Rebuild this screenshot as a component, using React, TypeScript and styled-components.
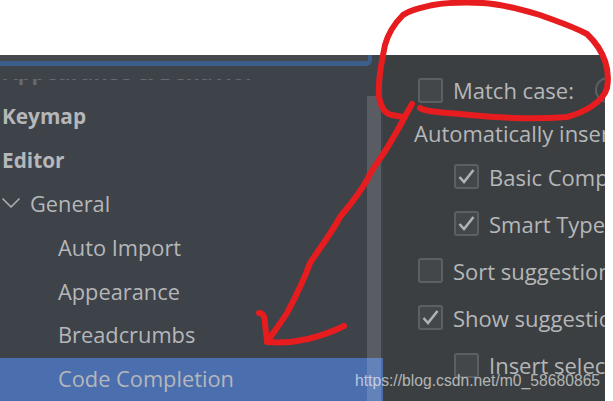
import React from 'react';
import styled, { createGlobalStyle } from 'styled-components';
import { ChevronDown } from 'lucide-react';

const Global = createGlobalStyle`
  html, body {
    margin: 0;
    padding: 0;
    background: #ffffff;
  }
`;

const Page = styled.div`
  position: relative;
  width: 613px;
  height: 401px;
  overflow: hidden;
  background: #ffffff;
  font-family: "Open Sans", "Noto Sans", sans-serif;
  color: #b5b7b9;
`;

const TopGap = styled.div`
  height: 55px;
`;

const Body = styled.div`
  display: flex;
  width: 605px;
  height: 346px;
`;

const Sidebar = styled.aside`
  position: relative;
  width: 383px;
  flex-shrink: 0;
  background: #3e4249;
  overflow: hidden;
`;

const SearchField = styled.div`
  box-sizing: border-box;
  width: 372px;
  height: 11px;
  border: 1px solid #3b5f8a;
  border-width: 0 4px 5px 0;
  border-bottom-right-radius: 6px;
  background: #45494d;
`;

const Spacer = styled.div`
  height: 13px;
`;

const FadedRow = styled.div`
  height: 15px;
  overflow: hidden;
  opacity: 0.35;
`;

const FadedText = styled.div`
  padding-left: 3px;
  margin-top: -20px;
  font-size: 21.5px;
  line-height: 26px;
  font-weight: 700;
  white-space: nowrap;
`;

const TreeRow = styled.div<{ $indent: number; $bold?: boolean; $selected?: boolean }>`
  box-sizing: border-box;
  display: flex;
  align-items: center;
  height: ${(p) => (p.$selected ? '44px' : '43.8px')};
  margin-top: ${(p) => (p.$selected ? '1px' : '0')};
  padding-left: ${(p) => p.$indent}px;
  padding-bottom: ${(p) => (p.$selected ? '3px' : '0')};
  font-size: ${(p) => (p.$bold ? '20.8px' : '21.8px')};
  font-weight: ${(p) => (p.$bold ? 700 : 400)};
  white-space: nowrap;
  background: ${(p) => (p.$selected ? '#4b6eaf' : 'transparent')};
`;

const Chevron = styled(ChevronDown)`
  width: 32px;
  height: 32px;
  margin-left: -5px;
  margin-right: 3px;
  color: #a9abad;
  stroke-width: 1.3;
`;

const Scrollbar = styled.div`
  position: absolute;
  top: 41px;
  right: 2px;
  bottom: 0;
  width: 14px;
  background: rgba(255, 255, 255, 0.14);
`;

const Settings = styled.section`
  flex: 1;
  display: flex;
  flex-direction: column;
  padding-top: 13px;
  background: #3c3f41;
  overflow: hidden;
`;

const OptionRow = styled.div<{ $indent: number; $height: number }>`
  display: flex;
  align-items: center;
  flex-shrink: 0;
  height: ${(p) => p.$height}px;
  padding-left: ${(p) => p.$indent}px;
  font-size: 22px;
  white-space: nowrap;
`;

const Box = styled.span`
  box-sizing: border-box;
  display: flex;
  align-items: center;
  justify-content: center;
  flex-shrink: 0;
  width: 25px;
  height: 25px;
  margin-right: 10px;
  border: 2px solid #5d6062;
  border-radius: 3px;
  background: #43474a;
`;

const HelpRing = styled.span`
  flex-shrink: 0;
  width: 22px;
  height: 22px;
  margin-left: 21px;
  border: 2px solid #5d6062;
  border-radius: 50%;
`;

const Annotation = styled.svg`
  position: absolute;
  inset: 0;
  width: 613px;
  height: 401px;
  pointer-events: none;
`;

const Watermark = styled.div`
  position: absolute;
  left: 355px;
  top: 372px;
  font-family: "Liberation Sans", Arial, sans-serif;
  font-size: 15.7px;
  line-height: 18px;
  color: rgba(255, 255, 255, 0.62);
  white-space: nowrap;
`;

const tree = [
  { label: 'Keymap', indent: 2, bold: true },
  { label: 'Editor', indent: 2, bold: true },
  { label: 'General', indent: 0, chevron: true },
  { label: 'Auto Import', indent: 58 },
  { label: 'Appearance', indent: 58 },
  { label: 'Breadcrumbs', indent: 58 },
  { label: 'Code Completion', indent: 58, selected: true },
];

const options = [
  { label: 'Match case:', indent: 35, height: 44, box: true, help: true },
  { label: 'Automatically insert single suggestions', indent: 31, height: 41 },
  { label: 'Basic Completion', indent: 71, height: 47, box: true, checked: true },
  { label: 'Smart Type Completion', indent: 71, height: 47, box: true, checked: true },
  { label: 'Sort suggestions alphabetically', indent: 35, height: 47, box: true },
  { label: 'Show suggestions as you type', indent: 35, height: 47, box: true, checked: true },
  { label: 'Insert selected suggestion', indent: 71, height: 48, box: true },
];

const Check = () => (
  <svg width="19" height="17" viewBox="0 0 19 17" fill="none">
    <path d="M2.5 9 L7 14 L16.5 2" stroke="#b0b2b4" strokeWidth="2.6" />
  </svg>
);

const App = () => (
  <Page>
    <Global />
    <TopGap />
    <Body>
      <Sidebar>
        <SearchField />
        <Spacer />
        <FadedRow>
          <FadedText>Appearance &amp; Behavior</FadedText>
        </FadedRow>
        {tree.map((row) => (
          <TreeRow key={row.label} $indent={row.indent} $bold={row.bold} $selected={row.selected}>
            {row.chevron && <Chevron />}
            {row.label}
          </TreeRow>
        ))}
        <Scrollbar />
      </Sidebar>
      <Settings>
        {options.map((opt) => (
          <OptionRow key={opt.label} $indent={opt.indent} $height={opt.height}>
            {opt.box && <Box>{opt.checked && <Check />}</Box>}
            {opt.label}
            {opt.help && <HelpRing />}
          </OptionRow>
        ))}
      </Settings>
    </Body>
    <Annotation viewBox="0 0 613 401" fill="none">
      <path
        d="M420 108 C428 113 445 112 470 115 C500 118 540 119 567 117 C585 112 603 102 607 88 C610 72 606 52 587 34 C572 26 556 21 540 15 C520 9 500 4 483 3 C462 2 445 3 433 5 C420 8 410 10 403 15 C394 24 388 34 385 45 C381 65 378 80 379 97 C381 108 386 114 392 115 L403 117"
        stroke="#e71c1f"
        strokeWidth="6"
        strokeLinecap="round"
      />
      <path
        d="M412 104 C404 118 397 132 390 143 C383 156 372 168 367 180 C358 196 348 207 340 217 C332 232 320 248 310 263 C304 280 295 298 287 313 C280 324 273 333 267 342"
        stroke="#e71c1f"
        strokeWidth="6"
        strokeLinecap="round"
      />
      <path
        d="M259 313 C264 313 265 318 265 324 C266 331 266 338 268 342 C280 343 295 342 308 339 C320 336 332 332 344 326"
        stroke="#e71c1f"
        strokeWidth="6"
        strokeLinecap="round"
      />
    </Annotation>
    <Watermark>https://blog.csdn.net/m0_58680865</Watermark>
  </Page>
);

export default App;
